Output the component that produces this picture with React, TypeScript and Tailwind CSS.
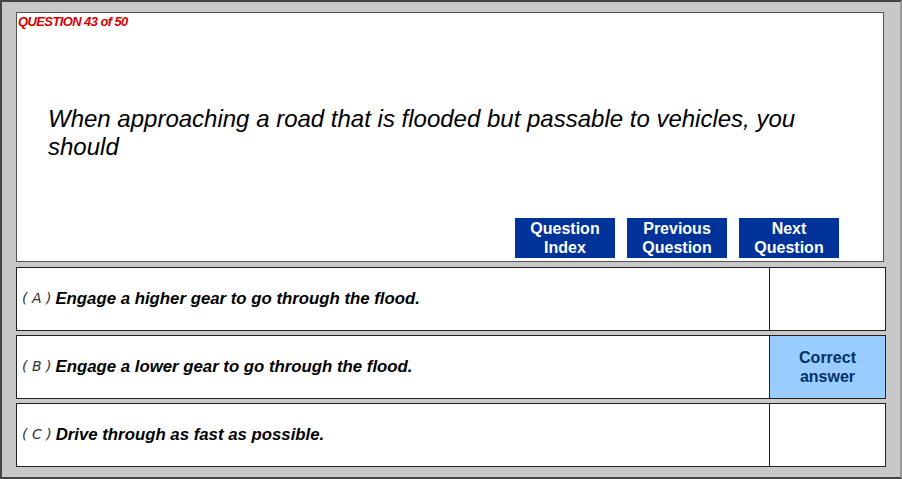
import React from "react";

const F = { fontFamily: '"Liberation Sans", Arial, sans-serif' };

function NavButton({ a, b }: { a: string; b: string }) {
  return (
    <div className="w-[100px] h-[40px] bg-[#003399] text-white font-bold text-[16px] leading-[19px] flex flex-col items-center justify-center text-center">
      <span>{a}</span>
      <span>{b}</span>
    </div>
  );
}

function Row({ letter, text, correct }: { letter: string; text: string; correct?: boolean }) {
  return (
    <div className="w-[870px] h-[64px] flex border border-[#222] bg-white">
      <div className="flex-1 flex items-center pl-[5px] pb-[1px]">
        <span
          className="italic text-[#333] mr-[4px]"
          style={{ fontFamily: '"DejaVu Sans", sans-serif', fontSize: 14, fontWeight: 200 }}
        >
          ( {letter} )
        </span>
        <span className="italic font-bold text-[16.8px] text-black">{text}</span>
      </div>
      <div
        className={
          correct
            ? "w-[116px] border-l border-[#222] bg-[#99ccff] text-[#003366] font-bold text-[16px] leading-[19px] flex flex-col items-center justify-center text-center"
            : "w-[116px] border-l border-[#222] bg-white"
        }
      >
        {correct ? (
          <>
            <span>Correct</span>
            <span>answer</span>
          </>
        ) : null}
      </div>
    </div>
  );
}

export default function App() {
  return (
    <div
      className="w-[902px] h-[479px] bg-[#c8c8c8] border-2 border-t-[#444] border-l-[#444] border-b-[#444] border-r-[#999] pl-[14px] pt-[10px] flex flex-col"
      style={F}
    >
      <div className="w-[868px] h-[250px] bg-white border border-[#555] flex flex-col relative">
        <div className="text-[#d40000] italic font-bold text-[13px] tracking-[-0.6px] pl-[1px] pt-[1px] leading-[15px]">
          QUESTION 43 of 50
        </div>
        <div className="pl-[31px] pt-[76px] pr-[60px] italic text-[24px] leading-[28px] text-black">
          When approaching a road that is flooded but passable to vehicles, you should
        </div>
        <div className="absolute left-[498px] top-[205px] flex gap-[12px]">
          <NavButton a="Question" b="Index" />
          <NavButton a="Previous" b="Question" />
          <NavButton a="Next" b="Question" />
        </div>
      </div>
      <div className="flex flex-col gap-[4px] mt-[5px]">
        <Row letter="A" text="Engage a higher gear to go through the flood." />
        <Row letter="B" text="Engage a lower gear to go through the flood." correct />
        <Row letter="C" text="Drive through as fast as possible." />
      </div>
    </div>
  );
}
